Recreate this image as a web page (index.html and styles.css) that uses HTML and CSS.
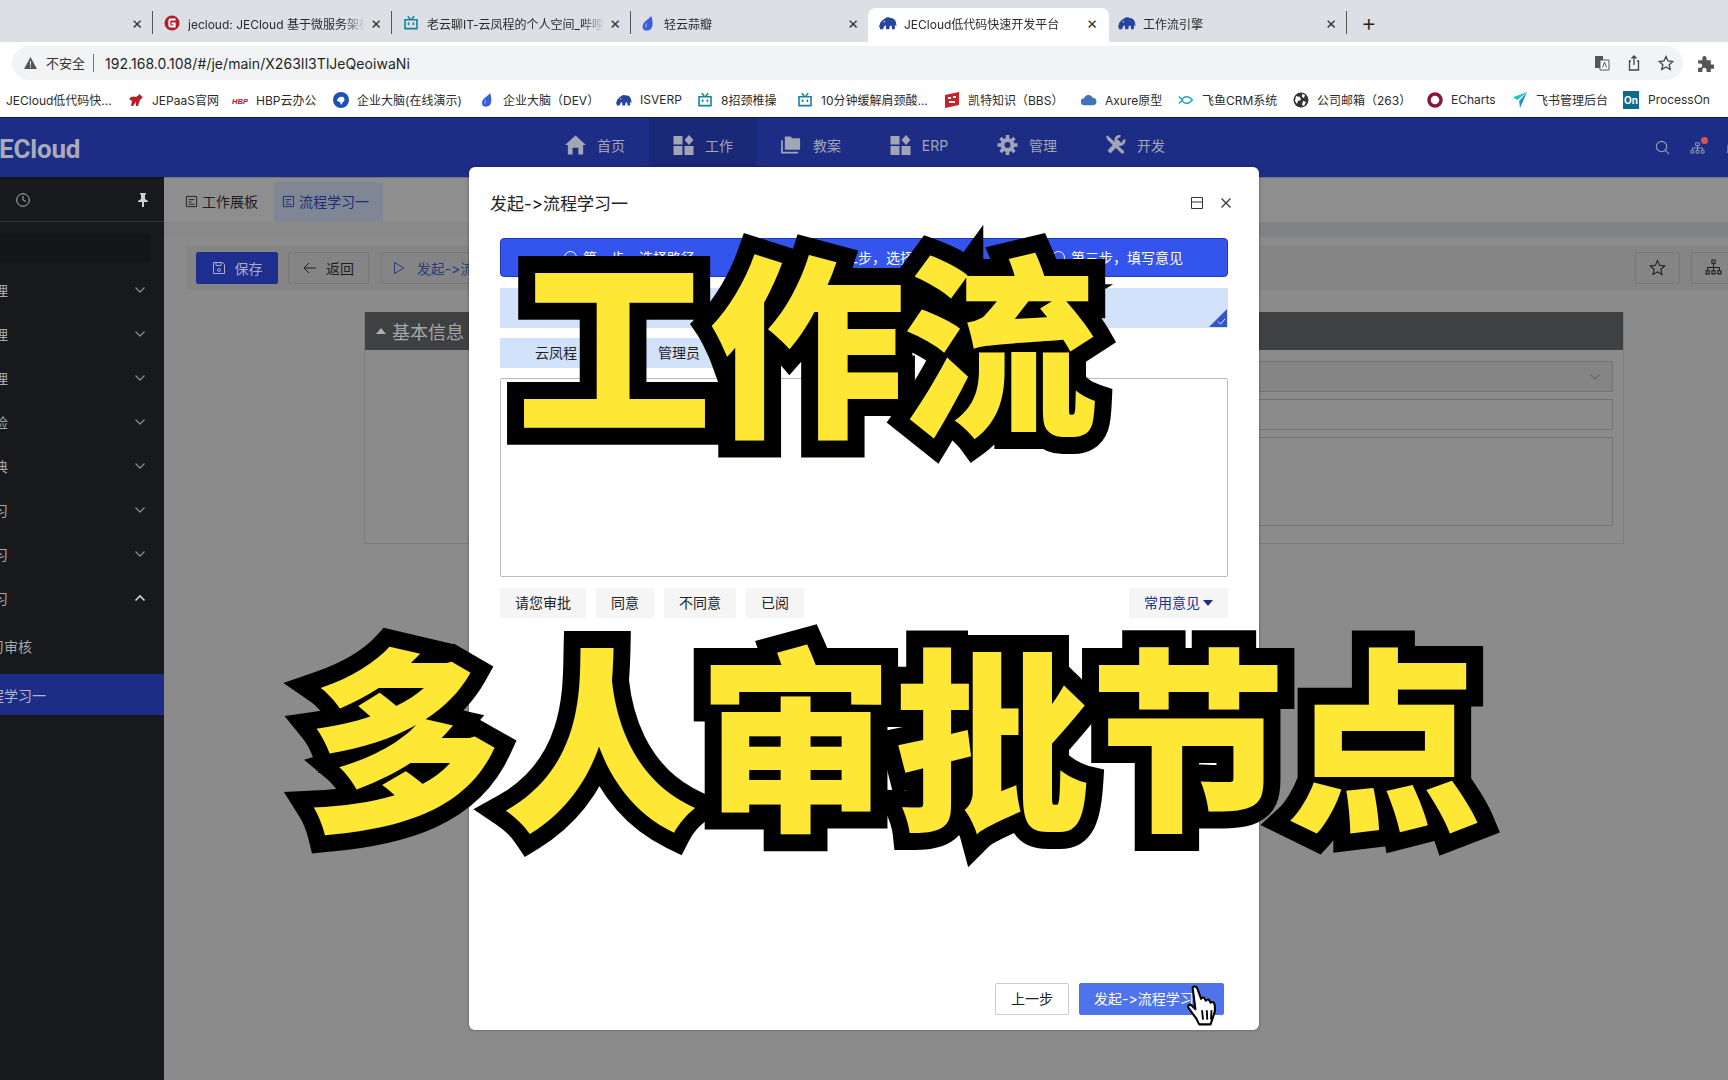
FILE: index.html
```html
<!DOCTYPE html>
<html lang="zh-CN">
<head>
<meta charset="utf-8">
<title>JECloud低代码快速开发平台</title>
<link rel="stylesheet" href="styles.css">
</head>
<body>
<svg class="defs" aria-hidden="true">
  <symbol id="elephant" viewBox="0 0 20 16"><path fill="#25459f" d="M1 15c-.5-5 1-10 5-11.500C8 1.500 11 1 13 2.500c3-.5 5.500 2 6 5.500l.5 4-1.500-2-.5 5h-3l-.5-4h-2l-.5 4H8l-.5-4.500C6 11 5 13 4.500 15z"/><path fill="#25459f" d="M2 7 0 12l1.500 1L4 8z"/><circle cx="6" cy="6.500" r=".8" fill="#fff"/></symbol>
  <symbol id="tv" viewBox="0 0 20 20"><path fill="none" stroke="#17829e" stroke-width="2" d="M2.500 6h15v11h-15zM6 1.500 9 5M14 1.500 11 5"/><path stroke="#17829e" stroke-width="2" d="M7 9.500v3M13 9.500v3"/></symbol>
  <symbol id="drop" viewBox="0 0 14 18"><path fill="#3a5ed8" d="M10.500 1C12 6 12.500 10 11 13.500 9.500 16.500 5 17.500 2.500 15.500 .5 13.500 1 10 3.500 7.500 6 5 8.500 3.500 10.500 1z"/><path fill="#9db2f2" d="M5 14c-1.500-1.500-1-4 1-6-.5 2-.5 4-1 6z"/></symbol>
  <symbol id="doc" viewBox="0 0 14 14"><path fill="none" stroke="currentColor" d="M1.500 1.500h11v11h-11zM4 5h6M4 7.500h3M4 10h6"/></symbol>
  <symbol id="chev" viewBox="0 0 12 8"><path fill="none" stroke="currentColor" stroke-width="1.300" d="M1.500 1.500 6 6l4.500-4.500"/></symbol>
  <symbol id="chevup" viewBox="0 0 12 8"><path fill="none" stroke="currentColor" stroke-width="1.600" d="M1.500 6.500 6 2l4.500 4.500"/></symbol>
  <symbol id="apps" viewBox="0 0 20 20"><path fill="currentColor" d="M0 1h9v8.500H0zM0 11h9v9H0zM11 11h9v9h-9zM15.500 0l4.500 5-4.500 5L11 5z"/></symbol>
</svg>

<div class="page">
  <div class="tabstrip">
    <div class="tab tab-first"><span class="tab-x">×</span></div>
    <div class="tab">
      <svg class="fav" viewBox="0 0 18 18"><circle cx="9" cy="9" r="8.500" fill="#b3202a"/><path fill="none" stroke="#fff" stroke-width="2.200" d="M13 5H7.500a1.500 1.500 0 0 0-1.500 1.500v5A1.500 1.500 0 0 0 7.500 13H12V9.500H8.500"/></svg>
      <span class="tab-t">jecloud: JECloud 基于微服务架构的低代码</span><span class="tab-x">×</span>
    </div>
    <div class="tab">
      <svg class="fav"><use href="#tv"/></svg>
      <span class="tab-t">老云聊IT-云凤程的个人空间_哔哩哔哩</span><span class="tab-x">×</span>
    </div>
    <div class="tab tab-noline">
      <svg class="fav fav-sm"><use href="#drop"/></svg>
      <span class="tab-t">轻云蒜瓣</span><span class="tab-x">×</span>
    </div>
    <div class="tab tab-active">
      <svg class="fav"><use href="#elephant"/></svg>
      <span class="tab-t">JECloud低代码快速开发平台</span><span class="tab-x">×</span>
    </div>
    <div class="tab tab-last">
      <svg class="fav"><use href="#elephant"/></svg>
      <span class="tab-t">工作流引擎</span><span class="tab-x">×</span>
    </div>
    <span class="tab-plus">+</span>
  </div>

  <div class="toolbar">
    <div class="omni">
      <svg class="warn" viewBox="0 0 14 13"><path fill="#555" d="M7 0l7 13H0z"/><path stroke="#fff" d="M7 4.500v4.500M7 10v1.500"/></svg>
      <span class="insecure">不安全</span>
      <span class="omni-url">192.168.0.108/#/je/main/X263Il3TlJeQeoiwaNi</span>
      <span class="omni-right">
        <svg class="omni-ic" viewBox="0 0 16 16"><path fill="#555" d="M1 1h8v12H1z"/><path fill="#fff" stroke="#555" d="M6 5h9v10H6z"/><path fill="none" stroke="#555" d="M8.500 12.500 10.500 7l2 5.500"/></svg>
        <svg class="omni-ic" viewBox="0 0 16 16"><path fill="none" stroke="#444" stroke-width="1.300" d="M5 6H3.500v9h9V6H11M8 10V1M5.500 3.500 8 1l2.500 2.500"/></svg>
        <svg class="omni-ic" viewBox="0 0 16 16"><path fill="none" stroke="#444" stroke-width="1.300" d="M8 1.500 10 6l4.800.5-3.600 3.200 1 4.800L8 12l-4.200 2.500 1-4.800L1.200 6.500 6 6z"/></svg>
      </span>
    </div>
    <svg class="puzzle" viewBox="0 0 16 16"><path fill="#555" d="M1 5h4V3a2 2 0 0 1 4 0v2h4v4h2a2 2 0 0 1 0 4h-2v3H9v-2a2 2 0 0 0-4 0v2H1v-4h2a2 2 0 0 0 0-4H1z"/></svg>
  </div>

  <div class="bookmarks">
    <div class="bm"><span>JECloud低代码快...</span></div>
    <div class="bm"><svg class="bm-ic" viewBox="0 0 16 14"><path fill="#b3202a" d="M1 6c2-3 5-3 7-2l4-3 1 2 2 1-3 3-2 6H8V9L5 13H3l1-5z"/></svg><span>JEPaaS官网</span></div>
    <div class="bm"><svg class="bm-ic" viewBox="0 0 18 10"><text class="hbp" x="0" y="9">HBP</text></svg><span>HBP云办公</span></div>
    <div class="bm"><svg class="bm-ic" viewBox="0 0 16 16"><circle cx="8" cy="8" r="8" fill="#1f4fb5"/><path fill="#fff" d="M4 9c0-3 3-5 6-4 2 1 2 4 0 5l-2 3-1-3z"/></svg><span>企业大脑(在线演示)</span></div>
    <div class="bm"><svg class="bm-ic"><use href="#drop"/></svg><span>企业大脑（DEV）</span></div>
    <div class="bm"><svg class="bm-ic"><use href="#elephant"/></svg><span>ISVERP</span></div>
    <div class="bm"><svg class="bm-ic"><use href="#tv"/></svg><span>8招颈椎操</span></div>
    <div class="bm"><svg class="bm-ic"><use href="#tv"/></svg><span>10分钟缓解肩颈酸...</span></div>
    <div class="bm"><svg class="bm-ic" viewBox="0 0 16 16"><path fill="#c9202a" d="M1 3l14-3v13L1 16z"/><path fill="#fff" d="M4 5h3v2H4zM9 4h3v2H9zM5 9h6v2H5z"/></svg><span>凯特知识（BBS）</span></div>
    <div class="bm"><svg class="bm-ic" viewBox="0 0 18 12"><path fill="#3f74b5" d="M4 12a4 4 0 0 1-.5-8A5 5 0 0 1 13 3.500 4.300 4.300 0 0 1 14 12z"/></svg><span>Axure原型</span></div>
    <div class="bm"><svg class="bm-ic" viewBox="0 0 18 12"><path fill="none" stroke="#23a9c4" stroke-width="1.600" d="M1 2l4 4-4 4M4 6c3-5 8-5 12 0-4 5-9 5-12 0z"/></svg><span>飞鱼CRM系统</span></div>
    <div class="bm"><svg class="bm-ic" viewBox="0 0 16 16"><circle cx="8" cy="8" r="7.500" fill="#333"/><path fill="#fff" d="M3 4l4 1 1 3-3 1-1 3-2-3zM9 2l3 1-1 3-2-1zM10 9l3 1-2 4-2-1z"/></svg><span>公司邮箱（263）</span></div>
    <div class="bm"><svg class="bm-ic" viewBox="0 0 16 16"><circle cx="8" cy="8" r="6" fill="none" stroke="#8a1538" stroke-width="3.500"/></svg><span>ECharts</span></div>
    <div class="bm"><svg class="bm-ic" viewBox="0 0 16 18"><path fill="#1cc6c0" d="M16 0 0 6l5 3z"/><path fill="#1f8fd6" d="M16 0 7 10l1 8z"/></svg><span>飞书管理后台</span></div>
    <div class="bm"><span class="on-ic">On</span><span>ProcessOn</span></div>
  </div>

  <div class="app">
    <header class="apphead">
      <div class="logo">ECloud</div>
      <nav class="nav">
        <a class="nav-i"><svg class="nav-ic" viewBox="0 0 22 20"><path fill="currentColor" d="M11 0l11 10h-3v10h-5v-7H8v7H3V10H0z"/></svg>首页</a>
        <a class="nav-i nav-on"><svg class="nav-ic"><use href="#apps"/></svg>工作</a>
        <a class="nav-i"><svg class="nav-ic" viewBox="0 0 22 20"><path fill="currentColor" d="M4 1h6l2 2h8v12H4z"/><path fill="none" stroke="currentColor" stroke-width="1.800" d="M1 5v13h17"/></svg>教案</a>
        <a class="nav-i"><svg class="nav-ic"><use href="#apps"/></svg>ERP</a>
        <a class="nav-i"><svg class="nav-ic" viewBox="0 0 20 20"><circle cx="10" cy="10" r="5" fill="none" stroke="currentColor" stroke-width="4"/><path stroke="currentColor" stroke-width="3.500" d="M10 0v4M10 16v4M0 10h4M16 10h4M3 3l3 3M14 14l3 3M17 3l-3 3M6 14l-3 3"/></svg>管理</a>
        <a class="nav-i"><svg class="nav-ic" viewBox="0 0 20 20"><path stroke="currentColor" stroke-width="3.200" stroke-linecap="round" d="M3 3.500 17 17"/><path stroke="currentColor" stroke-width="4" d="M14 6 3.500 17"/><path fill="none" stroke="currentColor" stroke-width="2.800" d="M18.500 4.500A4.200 4.200 0 1 1 15 1.200"/><path stroke="currentColor" stroke-width="2" d="M1 1l4 4"/></svg>开发</a>
      </nav>
      <div class="head-r">
        <svg class="head-ic" viewBox="0 0 16 16"><circle cx="7" cy="7" r="5.500" fill="none" stroke="currentColor" stroke-width="1.200"/><path stroke="currentColor" stroke-width="1.200" d="M11 11l4 4"/></svg>
        <span class="head-org">
          <svg class="head-ic" viewBox="0 0 16 16"><path fill="none" stroke="currentColor" d="M6 3h4v3H6zM1 11h3v3H1zM6.500 11h3v3h-3zM12 11h3v3h-3zM2.500 11V8.500h11V11M8 6v5"/></svg>
          <span class="dot"></span>
        </span>
        <svg class="head-ic bell" viewBox="0 0 16 16"><path fill="none" stroke="currentColor" d="M3 12V7a5 5 0 0 1 10 0v5l1 1H2z"/></svg>
      </div>
    </header>

    <div class="appbody">
      <aside class="sidebar">
        <div class="side-top">
          <svg class="clock" viewBox="0 0 14 14"><circle cx="7" cy="7" r="6.300" fill="none" stroke="currentColor"/><path fill="none" stroke="currentColor" d="M7 3v4l3 1.500"/></svg>
          <svg class="pin" viewBox="0 0 12 14"><path fill="#d0d0d0" d="M3 0h6v1L8 2v4l3 2v1H7v5H5V9H1V8l3-2V2L3 1z"/></svg>
        </div>
        <div class="side-search"></div>
        <ul class="menu">
          <li class="mi"><span class="clip">流程管理</span><svg class="mi-c"><use href="#chev"/></svg></li>
          <li class="mi"><span class="clip">表单管理</span><svg class="mi-c"><use href="#chev"/></svg></li>
          <li class="mi"><span class="clip">数据管理</span><svg class="mi-c"><use href="#chev"/></svg></li>
          <li class="mi"><span class="clip">质量检</span><svg class="mi-c"><use href="#chev"/></svg></li>
          <li class="mi"><span class="clip">数据字典</span><svg class="mi-c"><use href="#chev"/></svg></li>
          <li class="mi"><span class="clip">功能学习</span><svg class="mi-c"><use href="#chev"/></svg></li>
          <li class="mi"><span class="clip">流程学习</span><svg class="mi-c"><use href="#chev"/></svg></li>
          <li class="mi mi-open"><span class="clip">案例学习</span><svg class="mi-c"><use href="#chevup"/></svg></li>
          <li class="sub"><span class="clip clip-sub">学习审核</span></li>
          <li class="sub sub-on"><span class="clip clip-sub">流程学习一</span></li>
        </ul>
      </aside>

      <main class="main">
        <div class="mtabs">
          <span class="mtab"><svg class="mtab-ic"><use href="#doc"/></svg>工作展板</span>
          <span class="mtab mtab-on"><svg class="mtab-ic"><use href="#doc"/></svg>流程学习一</span>
        </div>
        <div class="band"></div>
        <div class="work">
          <div class="wbar">
            <button class="wbtn wbtn-save"><svg class="wbtn-ic" viewBox="0 0 14 14"><path fill="none" stroke="currentColor" d="M1.500 1.500h9l2 2v9h-11zM4 1.500v3h5v-3"/><circle cx="7" cy="9" r="1.500" fill="none" stroke="currentColor"/></svg>保存</button>
            <button class="wbtn"><svg class="wbtn-ic" viewBox="0 0 14 14"><path fill="none" stroke="currentColor" d="M13 7H1M6 2 1 7l5 5"/></svg>返回</button>
            <button class="wbtn wbtn-flow"><svg class="wbtn-ic" viewBox="0 0 14 14"><path fill="none" stroke="currentColor" d="M2.500 1.500 12 7l-9.500 5.500z"/></svg>发起->流程学习一</button>
            <span class="wbar-r">
              <button class="wbtn wbtn-sq"><svg class="wbtn-ic-lg" viewBox="0 0 16 16"><path fill="none" stroke="#1c1c1c" d="M8 1.500 10 6l4.800.5-3.600 3.200 1 4.800L8 12l-4.200 2.500 1-4.800L1.200 6.500 6 6z"/></svg></button>
              <button class="wbtn wbtn-sq"><svg class="wbtn-ic-lg" viewBox="0 0 16 16"><path fill="none" stroke="#1c1c1c" d="M6.500 1h3v3h-3zM1 11h3v3H1zM6.500 11h3v3h-3zM12 11h3v3h-3zM2.500 11V8h11v3M8 4v7"/></svg></button>
            </span>
          </div>
          <section class="panel">
            <div class="panel-h"><span class="tri"></span>基本信息</div>
            <div class="panel-b">
              <div class="field field-sel"><svg class="sel-c"><use href="#chev"/></svg></div>
              <div class="field"></div>
              <div class="field field-ta"></div>
            </div>
          </section>
        </div>
      </main>
    </div>
  </div>

  <div class="modal">
    <div class="m-head">
      <h2 class="m-title">发起->流程学习一</h2>
      <svg class="m-ic m-max" viewBox="0 0 14 14"><path fill="none" stroke="#333" d="M1.500 1.500h11v11h-11zM1.500 6h11"/></svg>
      <svg class="m-ic" viewBox="0 0 14 14"><path fill="none" stroke="#333" stroke-width="1.200" d="M2.500 2.500l9 9M11.500 2.500l-9 9"/></svg>
    </div>
    <div class="steps">
      <span class="step step-1"><i class="step-o"></i>第一步，选择路径</span>
      <span class="step step-2"><i class="step-o"></i>第二步，选择人员</span>
      <span class="step step-3"><i class="step-o"></i>第三步，填写意见</span>
    </div>
    <div class="target"><span class="corner"><svg class="corner-c" viewBox="0 0 10 8"><path fill="none" stroke="#fff" d="M1 4l3 3 5-6"/></svg></span></div>
    <div class="users">
      <span class="user">云凤程</span>
      <span class="user">管理员</span>
    </div>
    <div class="opinion"><span class="op-ph">审批意见</span></div>
    <div class="quick">
      <span class="q">请您审批</span>
      <span class="q">同意</span>
      <span class="q">不同意</span>
      <span class="q">已阅</span>
      <span class="q q-r">常用意见<i class="caret"></i></span>
    </div>
    <div class="m-foot">
      <button class="fbtn">上一步</button>
      <button class="fbtn fbtn-p">发起->流程学习一</button>
    </div>
    <svg class="hand" viewBox="0 0 36 44"><path fill="#fff" stroke="#000" stroke-width="2.200" stroke-linejoin="round" d="M7 3c2-2 4-1 5 1l4 11c1-2 3-2 4 0l1 2c1-2 3-2 4 0l1 2c1-1 3-1 4 1 1 4 1 9-1 13l-3 9H14l-3-6-8-11c-2-3 1-5 3-3l4 4z"/><path stroke="#000" stroke-width="2" d="M17 27l1 10M22 27l.5 10M27 27l-.5 10"/></svg>
  </div>

  <div class="slogan slogan-a">工作流</div>
  <div class="slogan slogan-b">多人审批节点</div>
</div>
</body>
</html>
```
FILE: styles.css
```css
* { box-sizing: border-box; }
html, body { margin: 0; padding: 0; }
body { font-family: "Inter", "Noto Sans CJK SC", "Noto Sans", sans-serif; background: #8b8b8b; font-variant-ligatures: none; font-feature-settings: "calt" 0, "liga" 0; }
button { font: inherit; }
ul { list-style: none; margin: 0; padding: 0; }
h2 { margin: 0; font: inherit; }
.defs { position: absolute; width: 0; height: 0; }
.page { position: relative; width: 1728px; height: 1080px; overflow: hidden; display: flex; flex-direction: column; }

/* tab strip */
.tabstrip { height: 42px; background: #dcdfe4; display: flex; align-items: flex-end; flex: none; }
.tab { width: 239px; height: 34px; display: flex; align-items: center; padding: 0 9px 4px 10px; position: relative; font-size: 12px; color: #2b2b2b; flex: none; }
.tab::after { content: ""; position: absolute; right: 0; top: 3px; height: 23px; width: 1px; background: #555; }
.tab-first { width: 153px; justify-content: flex-end; }
.tab-noline { width: 238px; }
.tab-noline::after, .tab-active::after { display: none; }
.tab-active { background: #fff; border-radius: 8px 8px 0 0; width: 241px; padding-left: 11px; padding-right: 10px; margin-left: -1px; }
.tab-last { padding-left: 9px; width: 238px; }
.fav { width: 18px; height: 16px; margin-right: 7px; flex: none; }
.fav-sm { width: 14px; height: 17px; margin-right: 9px; }
.tab-t { flex: 1; min-width: 0; white-space: nowrap; overflow: hidden; -webkit-mask-image: linear-gradient(90deg, #000 88%, transparent); mask-image: linear-gradient(90deg, #000 88%, transparent); }
.tab-x { width: 14px; text-align: center; font-size: 17px; line-height: 16px; color: #333; flex: none; margin-left: 4px; }
.tab-plus { font-size: 24px; line-height: 24px; margin: 0 0 7px 14px; color: #222; font-weight: 300; }

/* address bar */
.toolbar { height: 42px; background: #fff; display: flex; align-items: center; padding: 0 13px 0 12px; flex: none; }
.omni { width: 1671px; height: 34px; border-radius: 17px; background: #f1f3f4; display: flex; align-items: center; padding-left: 12px; font-size: 14px; color: #333; }
.warn { width: 13px; height: 12px; margin-right: 9px; }
.insecure { font-size: 13px; padding-right: 8px; border-right: 1px solid #777; line-height: 18px; margin-right: 11px; }
.omni-url { color: #1f1f1f; font-size: 14px; letter-spacing: .05px; }
.omni-right { margin-left: auto; display: flex; gap: 16px; padding-right: 9px; }
.omni-ic { width: 16px; height: 16px; }
.puzzle { width: 17px; height: 17px; margin-left: 14px; }

/* bookmarks */
.bookmarks { height: 33px; padding-bottom: 2px; background: #fff; display: grid; grid-template-columns: 122px 104px 101px 146px 137px 81px 100px 147px 137px 97px 115px 134px 85px 111px 1fr; padding-left: 6px; align-items: center; font-size: 12px; color: #2b2b2b; flex: none; white-space: nowrap; }
.bm { display: flex; align-items: center; gap: 8px; }
.bm-ic { width: 16px; height: 16px; flex: none; }
.hbp { font: italic 900 8.500px "Liberation Sans", sans-serif; fill: #a8182a; }
.on-ic { width: 16px; height: 18px; background: #11688f; color: #fff; font-size: 10px; font-weight: 700; display: flex; align-items: center; justify-content: center; margin-right: 1px; }

/* application */
.app { flex: 1; display: flex; flex-direction: column; min-height: 0; }
.apphead { height: 60px; background: #1d2d85; border-top: 1px solid #0f1b55; display: flex; align-items: center; flex: none; color: #a2a5b5; position: relative; }
.logo { width: 542px; margin-left: -1px; font-size: 26px; font-weight: 700; color: #a9acb8; letter-spacing: -.2px; margin-top: 2px; font-family: "Roboto", sans-serif; }
.nav { display: grid; grid-template-columns: repeat(6, 108px); height: 100%; }
.nav-i { display: flex; align-items: center; justify-content: center; gap: 11px; font-size: 14px; color: #a2a5b5; padding-bottom: 5px; }
.nav-on { background: #1a2878; }
.nav-ic { width: 21px; height: 20px; color: #a2a5b5; }
.head-r { margin-left: auto; display: flex; align-items: center; gap: 20px; margin-right: -12px; padding-bottom: 1px; }
.head-ic { width: 15px; height: 15px; display: block; color: #9a9eb0; }
.head-org { position: relative; }
.dot { position: absolute; right: -3px; top: -3px; width: 7px; height: 7px; border-radius: 50%; background: #d9534f; }

.appbody { flex: 1; display: flex; min-height: 0; }
.sidebar { width: 164px; background: #18191c; border-top: 1px solid #0e0f11; flex: none; color: #a9a9a9; font-size: 14px; }
.side-top { height: 44px; border-bottom: 1px solid #333; display: flex; align-items: center; justify-content: space-between; padding: 0 15px 0 16px; }
.clock { width: 14px; height: 14px; color: #b5b5b5; }
.pin { width: 12px; height: 14px; }
.side-search { width: 149px; height: 30px; margin-top: 11px; background: #141517; }
.menu { padding-top: 5px; }
.mi { height: 44px; display: flex; align-items: center; justify-content: space-between; padding-right: 18px; }
.mi-c { width: 12px; height: 8px; color: #888; }
.mi-open .mi-c { color: #d5d5d5; }
.clip { display: flex; justify-content: flex-end; width: 8px; overflow: hidden; white-space: nowrap; flex: none; }
.clip-sub { width: 32px; }
.sub { height: 40px; margin-top: 4px; display: flex; align-items: center; padding-top: 4px; }
.sub-on { height: 41px; margin-top: 10px; padding-top: 0; background: #1d2d85; width: 164px; color: #b5b8c8; }
.sub-on .clip-sub { width: 46px; }

.main { flex: 1; min-width: 0; display: flex; flex-direction: column; background: #8b8b8b; border-top: 1px solid #6f7480; }
.mtabs { height: 44px; display: flex; align-items: flex-end; padding-left: 12px; font-size: 14px; color: #1d1d1d; flex: none; gap: 7px; background: #8e8e8e; }
.mtab { height: 40px; display: flex; align-items: center; gap: 4px; padding: 0 9px 2px; }
.mtab-on { width: 109px; background: #808794; color: #1c2a78; border-radius: 4px 4px 0 0; padding: 0 8px 2px; white-space: nowrap; }
.mtab-ic { width: 13px; height: 13px; }
.band { height: 15px; background: linear-gradient(90deg, #89898a 60%, #808285 62%); flex: none; }
.work { flex: 1; padding: 8px 0 0 22px; }
.wbar { height: 45px; background: #858585; display: flex; align-items: center; gap: 10px; padding-left: 10px; width: 1550px; }
.wbtn { height: 32px; width: 81px; background: transparent; border: 1px solid #777; border-radius: 2px; color: #1d1d1d; font-size: 14px; display: flex; align-items: center; justify-content: center; gap: 9px; padding: 0; white-space: nowrap; overflow: hidden; }
.wbtn-save { background: #1f2f8f; border-color: #1f2f8f; color: #a8adc8; width: 82px; }
.wbtn-flow { width: 160px; margin-left: 2px; color: #2a3f7a; gap: 11px; }
.wbtn-ic { width: 14px; height: 14px; flex: none; }
.wbtn-ic-lg { width: 17px; height: 17px; }
.wbar-r { margin-left: auto; display: flex; gap: 11px; }
.wbtn-sq { width: 45px; }
.panel { margin: 22px 0 0 178px; width: 1260px; border: 1px solid #7c7c7c; border-top: 0; }
.panel-h { height: 38px; background: #3f4042; color: #a6a6a6; font-size: 18px; display: flex; align-items: center; gap: 6px; padding-left: 11px; }
.tri { width: 0; height: 0; border: 5px solid transparent; border-bottom: 6px solid #b0b0b0; border-top: 0; }
.panel-b { height: 193px; padding: 11px 10px 0 140px; display: flex; flex-direction: column; gap: 7px; }
.field { height: 31px; border: 1px solid #737373; display: flex; align-items: center; justify-content: flex-end; padding-right: 11px; }
.field-sel { background: #858585; }
.field-ta { height: 89px; }
.sel-c { width: 12px; height: 8px; color: #6a6a6a; }

/* dialog */
.modal { position: absolute; left: 469px; top: 167px; width: 790px; height: 863px; background: #fff; border-radius: 6px; padding: 0 31px; display: flex; flex-direction: column; box-shadow: 0 0 3px rgba(0, 0, 0, .4); }
.m-head { height: 71px; display: flex; align-items: center; gap: 15px; margin-left: -10px; margin-right: -5px; }
.m-title { font-size: 17px; color: #222; margin-right: auto; white-space: nowrap; }
.m-ic { width: 14px; height: 14px; }
.steps { height: 39px; background: #3454ee; border: 1px solid #2238b8; border-radius: 4px; display: flex; color: #fff; font-size: 14px; align-items: center; padding-left: 63px; flex: none; overflow: hidden; }
.step { flex: none; display: flex; align-items: center; gap: 6px; white-space: nowrap; padding-bottom: 1px; }
.step-1 { width: 247px; }
.step-2 { width: 241px; }
.step-o { width: 13px; height: 13px; border: 1px solid #fff; border-radius: 50%; }
.target { height: 40px; margin-top: 11px; background: #d2e2fb; position: relative; flex: none; }
.corner { position: absolute; right: 1px; bottom: 1px; width: 0; height: 0; border-left: 18px solid transparent; border-bottom: 18px solid #3454c8; }
.corner-c { position: absolute; left: -10px; top: 9px; width: 9px; height: 7px; }
.users { height: 30px; margin-top: 10px; display: flex; gap: 2px; font-size: 14px; color: #222; flex: none; }
.user { width: 110px; background: #d2e2fb; display: flex; align-items: center; padding-left: 35px; padding-bottom: 2px; }
.user + .user { padding-left: 46px; }
.opinion { height: 199px; margin-top: 10px; border: 1px solid #bbb; border-radius: 2px; padding: 0 28px; font-size: 12px; color: #555; flex: none; }
.quick { display: flex; gap: 10px; margin-top: 11px; height: 30px; flex: none; font-size: 14px; color: #222; }
.q { height: 30px; background: #f5f5f5; padding: 0 15px 2px; display: flex; align-items: center; white-space: nowrap; }
.q-r { margin-left: auto; width: 99px; color: #1f2f85; gap: 3px; }
.caret { width: 0; height: 0; border: 5px solid transparent; border-top: 6px solid #1f2f85; border-bottom: 0; margin-top: 2px; }
.m-foot { margin-top: auto; margin-bottom: 15px; display: flex; justify-content: flex-end; gap: 10px; margin-right: 4px; }
.fbtn { height: 32px; width: 74px; background: #fff; border: 1px solid #ccc; border-radius: 2px; font-size: 14px; color: #222; padding: 0 0 2px; }
.fbtn-p { width: 145px; background: #4f73ea; border-color: #4f73ea; color: #fff; white-space: nowrap; text-align: left; padding-left: 14px; overflow: hidden; }
.hand { position: absolute; left: 717px; top: 817px; width: 34px; height: 43px; }

/* video title overlay */
.slogan { position: absolute; font-family: "Noto Sans CJK SC", sans-serif; font-weight: 900; color: #ffe835; -webkit-text-stroke: 34px #000; paint-order: stroke fill; white-space: nowrap; line-height: 1; }
.slogan-a { left: 516px; top: 238px; font-size: 196px; letter-spacing: -3px; }
.slogan-b { left: 306px; top: 632px; font-size: 196px; letter-spacing: 0; }
```
